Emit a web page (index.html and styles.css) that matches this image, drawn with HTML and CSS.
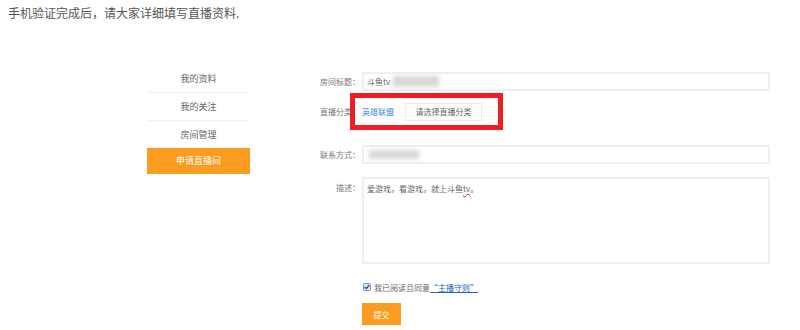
FILE: index.html
```html
<!DOCTYPE html>
<html lang="zh-CN">
<head>
    <meta charset="UTF-8">
    <title>申请直播间</title>
    <link rel="stylesheet" href="styles.css">
</head>
<body>

<p class="intro">手机验证完成后，请大家详细填写直播资料.</p>

<div class="main">
    <!-- 左侧菜单 -->
    <ul class="side">
        <li class="side-item">我的资料</li>
        <li class="side-item">我的关注</li>
        <li class="side-item last">房间管理</li>
        <li class="side-item active">申请直播间</li>
    </ul>

    <!-- 申请表单 -->
    <form class="form">
        <div class="row row-title">
            <label class="label">房间标题：</label>
            <div class="input">斗鱼tv<span class="blur blur-title"></span></div>
        </div>

        <div class="row row-cate">
            <label class="label">直播分类：</label>
            <a class="cate-link" href="#">英雄联盟</a>
            <span class="cate-btn">请选择直播分类</span>
            <div class="mark"></div>
        </div>

        <div class="row row-contact">
            <label class="label">联系方式：</label>
            <div class="input"><span class="blur blur-phone"></span></div>
        </div>

        <div class="row row-desc">
            <label class="label">描述：</label>
            <div class="textarea">爱游戏，看游戏，就上斗鱼<span class="typo">tv</span>。</div>
        </div>

        <div class="row row-agree">
            <span class="check">
                <svg width="8" height="8" viewBox="0 0 8 8">
                    <rect x="0.5" y="0.5" width="7" height="7" rx="1" fill="#dce6f4" stroke="#6f8fbf"/>
                    <path d="M1.8 4.1 L3.3 5.6 L6.2 2.2" fill="none" stroke="#1f3c78" stroke-width="1.3"/>
                </svg>
            </span>
            <span class="agree-text">我已阅读且同意<a href="#">“主播守则”</a></span>
        </div>

        <div class="row row-submit">
            <button type="button" class="submit">提交</button>
        </div>
    </form>
</div>

</body>
</html>
```

FILE: styles.css
```css
/* 基本样式 */
body {
    margin: 0;
    font-family: "Noto Sans CJK SC", "Liberation Sans", sans-serif;
    color: #666;
    background: #fff;
}
.intro {
    margin: 0;
    padding: 5px 8px 0;
    font-size: 12px;
    line-height: 16px;
    color: #555;
}
.main {
    display: flex;
    margin-top: 44px;
    padding-left: 147px;
}

/* 左侧菜单 */
.side {
    list-style: none;
    margin: 0;
    padding: 0;
    width: 103px;
}
.side-item {
    height: 27px;
    line-height: 27px;
    text-align: center;
    font-size: 9px;
    color: #666;
    border-bottom: 1px solid #f2f2f2;
}
.side-item.last {
    border-bottom: none;
}
.side-item.active {
    height: 26px;
    line-height: 26px;
    background: #fb9b1f;
    color: #fff;
    border-bottom: none;
}

/* 表单 */
.form {
    margin-left: 50px;
    width: 470px;
    font-size: 8px;
}
.row {
    display: flex;
    align-items: center;
}
.label {
    width: 60px;
    padding-right: 2px;
    text-align: right;
    color: #777;
    flex-shrink: 0;
}
.input {
    box-sizing: border-box;
    width: 408px;
    height: 19px;
    line-height: 15px;
    padding: 0 3px;
    border: 2px solid #efefef;
    color: #666;
    display: flex;
    align-items: center;
}
.blur {
    display: inline-block;
    height: 11px;
    background: #d8d8d8;
    filter: blur(2px);
}
.blur-title {
    width: 46px;
    margin-left: 3px;
}
.blur-phone {
    width: 50px;
    height: 9px;
    margin-left: 2px;
}
.row-title {
    margin-top: 7px;
}
.row-cate {
    position: relative;
    height: 37px;
    margin-top: 2px;
}
.cate-link {
    color: #3a8bd6;
    text-decoration: none;
}
.cate-btn {
    box-sizing: border-box;
    margin-left: 11px;
    width: 77px;
    height: 18px;
    line-height: 16px;
    text-align: center;
    border: 1px solid #ececec;
    color: #666;
}
.mark {
    position: absolute;
    left: 50px;
    top: 0;
    width: 153px;
    height: 37px;
    box-sizing: border-box;
    border: 5px solid #ee1d24;
}
.row-contact {
    margin-top: 15px;
}
.row-desc {
    margin-top: 13px;
    align-items: flex-start;
}
.row-desc .label {
    padding-top: 6px;
    line-height: 10px;
}
.textarea {
    box-sizing: border-box;
    width: 408px;
    height: 87px;
    padding: 5px 3px;
    line-height: 10px;
    border: 2px solid #efefef;
    color: #666;
}
.typo {
    text-decoration: underline wavy #e02020;
}
.row-agree {
    margin-top: 17px;
    padding-left: 63px;
    height: 12px;
}
.check {
    display: flex;
    width: 8px;
    height: 8px;
}
.agree-text {
    margin-left: 3px;
    color: #666;
}
.agree-text a {
    color: #2563b8;
    text-decoration: underline;
}
.row-submit {
    margin-top: 10px;
    padding-left: 62px;
}
.submit {
    width: 39px;
    height: 22px;
    border: none;
    background: #fb9b1f;
    color: #fff;
    font-family: inherit;
    font-size: 8px;
    padding: 0;
}
```
